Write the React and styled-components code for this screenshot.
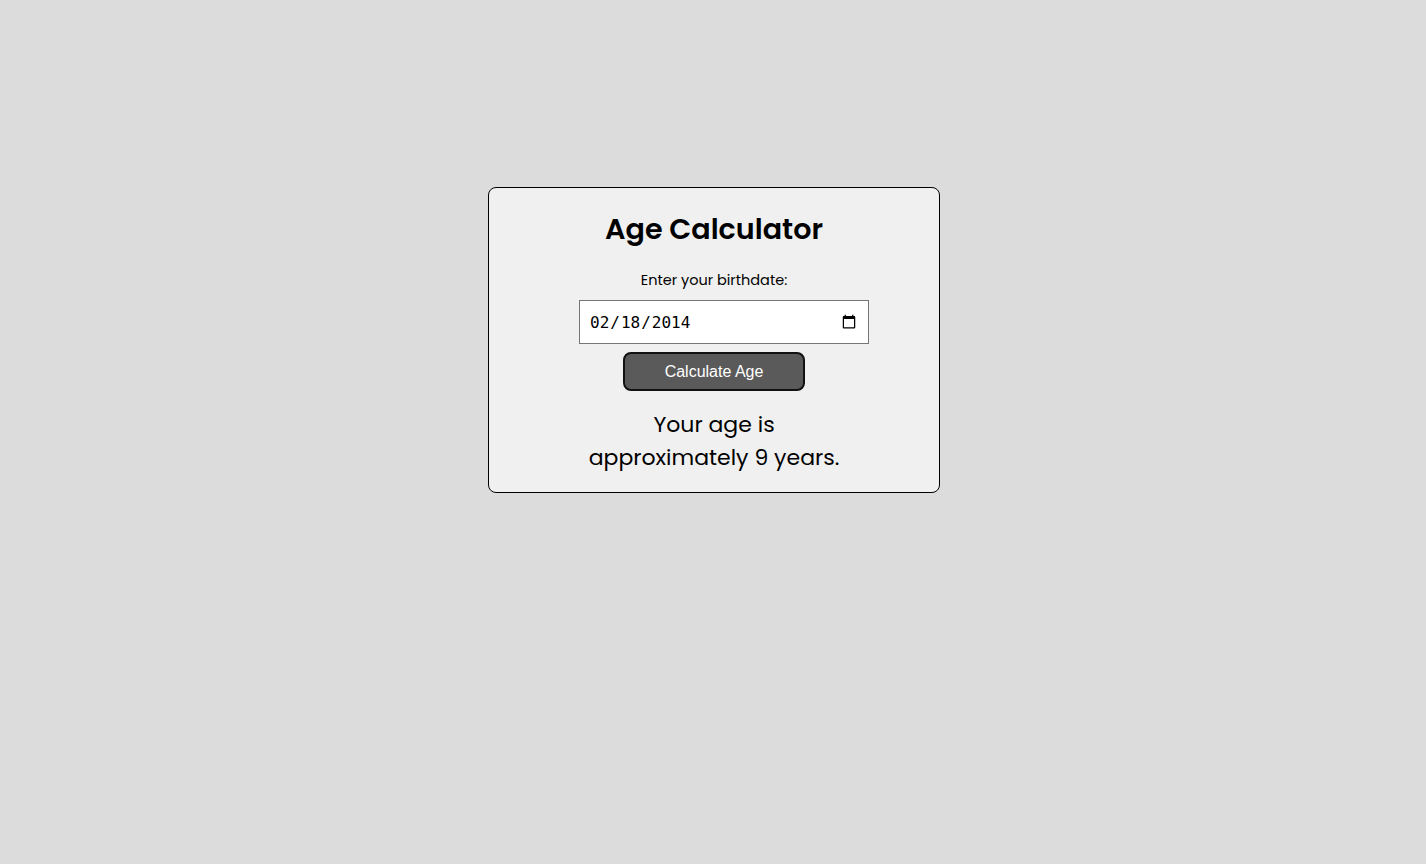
import React, { useState } from 'react';
import styled, { createGlobalStyle } from 'styled-components';

const GlobalStyle = createGlobalStyle`
  body {
    margin: 0;
    background: #dcdcdc;
    font-family: "Poppins", "Open Sans", sans-serif;
  }
`;

const getAge = (value) => {
  const birth = new Date(value);
  const now = new Date('2023-06-01');
  let age = now.getFullYear() - birth.getFullYear();
  const m = now.getMonth() - birth.getMonth();
  if (m < 0 || (m === 0 && now.getDate() < birth.getDate())) age--;
  return age;
};

const App = () => {
  const [date, setDate] = useState('2014-02-18');
  const [age, setAge] = useState(getAge('2014-02-18'));

  return (
    <StyledPage>
      <GlobalStyle />
      <StyledCard>
        <StyledTitle>Age Calculator</StyledTitle>
        <StyledLabel htmlFor="birthdate">Enter your birthdate:</StyledLabel>
        <StyledInput
          id="birthdate"
          type="date"
          value={date}
          onChange={(e) => setDate(e.target.value)}
        />
        <StyledButton onClick={() => setAge(getAge(date))}>Calculate Age</StyledButton>
        <StyledResult>Your age is approximately {age} years.</StyledResult>
      </StyledCard>
    </StyledPage>
  );
};

const StyledPage = styled.div`
  min-height: 100vh;
  display: flex;
  justify-content: center;
  align-items: flex-start;
  padding: 187px 0 0 2px;
  box-sizing: border-box;
`;

const StyledCard = styled.div`
  width: 452px;
  box-sizing: border-box;
  background: #f0f0f0;
  border: 1px solid #000;
  border-radius: 8px;
  padding: 20px 20px 18px;
  display: flex;
  flex-direction: column;
  align-items: center;
  text-align: center;
`;

const StyledTitle = styled.h1`
  margin: 0;
  font-size: 28.6px;
  line-height: 42px;
  font-weight: 600;
  color: #000;
`;

const StyledLabel = styled.label`
  margin-top: 19px;
  font-size: 14.5px;
  line-height: 22px;
  color: #000;
`;

const StyledInput = styled.input`
  margin: 9px 0 0 20px;
  width: 290px;
  height: 44px;
  box-sizing: border-box;
  padding: 0 11px 0 9px;
  border: 1px solid #767676;
  background: #fff;
  font-family: "DejaVu Sans Mono", "Liberation Mono", monospace;
  font-size: 16px;
  color: #000;
  &::-webkit-calendar-picker-indicator {
    width: 16px;
    height: 16px;
    padding: 0;
  }
`;

const StyledButton = styled.button`
  margin-top: 8px;
  width: 182px;
  height: 39px;
  background: #5a5a5a;
  color: #fff;
  border: 2px solid #111;
  border-radius: 8px;
  font-family: "Liberation Sans", Arial, sans-serif;
  font-size: 16px;
  cursor: pointer;
`;

const StyledResult = styled.p`
  margin: 17px 0 0;
  max-width: 270px;
  font-size: 22px;
  line-height: 33px;
  color: #000;
`;

export default App;
